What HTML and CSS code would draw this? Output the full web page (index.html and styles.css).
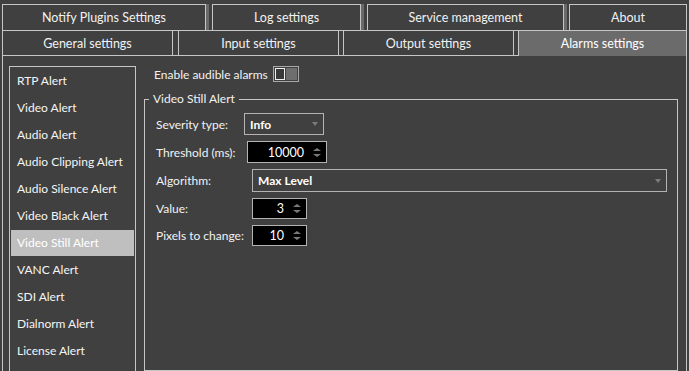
FILE: index.html
```html
<!DOCTYPE html>
<html>
<head>
<meta charset="utf-8">
<link rel="stylesheet" href="styles.css">
</head>
<body>
<div class="app">
  <div class="tabrow row1">
    <div class="tab t-notify">Notify Plugins Settings</div>
    <div class="tab t-log">Log settings</div>
    <div class="tab t-service">Service management</div>
    <div class="tab t-about">About</div>
  </div>
  <div class="tabrow row2">
    <div class="tab t-general">General settings</div>
    <div class="tab t-input">Input settings</div>
    <div class="tab t-output">Output settings</div>
    <div class="tab t-alarms active">Alarms settings</div>
  </div>
  <div class="pane">
    <ul class="alert-list">
      <li>RTP Alert</li>
      <li>Video Alert</li>
      <li>Audio Alert</li>
      <li>Audio Clipping Alert</li>
      <li>Audio Silence Alert</li>
      <li>Video Black Alert</li>
      <li class="selected">Video Still Alert</li>
      <li>VANC Alert</li>
      <li>SDI Alert</li>
      <li>Dialnorm Alert</li>
      <li>License Alert</li>
    </ul>
    <div class="content">
      <div class="enable-row">
        <span>Enable audible alarms</span>
        <span class="toggle"><span class="knob"></span><span class="track"></span></span>
      </div>
      <fieldset class="group">
        <legend>Video Still Alert</legend>
        <div class="form">
          <div class="form-row">
            <span class="label l-sev">Severity type:</span>
            <div class="combo combo-sev"><span>Info</span><span class="arrow"></span></div>
          </div>
          <div class="form-row">
            <span class="label l-thr">Threshold (ms):</span>
            <div class="spin spin-wide"><span>10000</span><span class="spin-arrows"><span class="up"></span><span class="down"></span></span></div>
          </div>
          <div class="form-row">
            <span class="label l-std">Algorithm:</span>
            <div class="combo combo-algo"><span>Max Level</span><span class="arrow"></span></div>
          </div>
          <div class="form-row">
            <span class="label l-std">Value:</span>
            <div class="spin spin-small"><span>3</span><span class="spin-arrows"><span class="up"></span><span class="down"></span></span></div>
          </div>
          <div class="form-row">
            <span class="label l-std">Pixels to change:</span>
            <div class="spin spin-small"><span>10</span><span class="spin-arrows"><span class="up"></span><span class="down"></span></span></div>
          </div>
        </div>
      </fieldset>
    </div>
  </div>
</div>
</body>
</html>
```
FILE: styles.css
```css
html, body {
  margin: 0;
  height: 371px;
  overflow: hidden;
  background: #404040;
}
body {
  font-family: Lato, "Open Sans", sans-serif;
  font-size: 12px;
  color: #f2f2f2;
}
.app {
  padding: 4px 2px 0 2px;
}
.tabrow {
  display: flex;
  box-sizing: border-box;
}
.row1 {
  height: 26px;
}
.tab {
  box-sizing: border-box;
  display: flex;
  align-items: center;
  justify-content: center;
  background: #404040;
  white-space: nowrap;
  font-size: 12.5px;
}
.row1 .tab {
  border: 1px solid #c6c6c6;
  border-bottom: none;
  height: 26px;
  padding-bottom: 1px;
}
.t-notify { width: 204px; margin-right: 6px; box-shadow: 3px 0 0 #6a6a6a; }
.t-log { width: 149px; margin-right: 6px; box-shadow: 3px 0 0 #6a6a6a; }
.t-service { width: 197px; margin-right: 5px; box-shadow: 3px 0 0 #6a6a6a; }
.t-about { flex: 1; }

.row2 {
  height: 26px;
  border-top: 1px solid #c6c6c6;
  border-bottom: 1px solid #c6c6c6;
}
.row2 .tab {
  height: 24px;
  border-left: 1px solid #c6c6c6;
  border-right: 1px solid #c6c6c6;
}
.t-general { width: 171px; margin-right: 5px; }
.t-input { width: 161px; margin-right: 4px; }
.t-output { width: 171px; margin-right: 4px; }
.t-alarms { flex: 1; }
.row2 .tab.active {
  background: #6b6b6b;
  height: 25px;
  margin-bottom: -1px;
  padding-bottom: 1px;
  color: #ffffff;
}

.pane {
  display: flex;
  box-sizing: border-box;
  height: 315px;
  overflow: hidden;
  border-left: 1px solid #c6c6c6;
  border-right: 1px solid #c6c6c6;
  padding: 10px 8px 0 6px;
}
.alert-list {
  list-style: none;
  margin: 0 8px 0 0;
  padding: 1px;
  width: 127px;
  box-sizing: border-box;
  height: 320px;
  flex: none;
  border: 1px solid #c6c6c6;
}
.alert-list li {
  height: 26px;
  line-height: 26px;
  margin-bottom: 1px;
  padding-left: 6px;
  color: #f5f5f5;
  white-space: nowrap;
}
.alert-list li.selected {
  background: #bfbfbf;
  color: #ffffff;
}

.content {
  flex: 1;
  display: flex;
  flex-direction: column;
  min-width: 0;
}
.enable-row {
  display: flex;
  align-items: center;
  height: 16px;
  padding-left: 10px;
  gap: 5px;
}
.toggle {
  box-sizing: border-box;
  width: 26px;
  height: 16px;
  border: 1px solid #a8a8a8;
  display: flex;
  align-items: center;
  padding: 1px;
  gap: 1px;
  flex: none;
}
.knob {
  box-sizing: border-box;
  width: 10px;
  height: 12px;
  border: 1px solid #f0f0f0;
  background: #3a3a3a;
}
.track {
  flex: 1;
  height: 12px;
  background: #6e6e6e;
}

.group {
  margin: 9px 0 0 0;
  padding: 0 10px 0 4px;
  border: 1px solid #c6c6c6;
  min-width: 0;
  height: 300px;
}
.group legend {
  padding: 0 4px;
  line-height: 16px;
  color: #f2f2f2;
}
.form {
  display: flex;
  flex-direction: column;
  gap: 6px;
  margin-top: 6px;
  padding-left: 7px;
}
.form-row {
  display: flex;
  align-items: center;
}
.label { flex: none; white-space: nowrap; }
.l-sev { width: 88px; }
.l-thr { width: 91px; }
.l-std { width: 96px; }

.combo {
  box-sizing: border-box;
  height: 22px;
  border: 1px solid #b3b3b3;
  background: #404040;
  display: flex;
  align-items: center;
  justify-content: space-between;
  padding: 0 5px 0 5px;
  font-weight: 700;
  color: #ffffff;
}
.combo-sev { width: 80px; }
.combo-algo { flex: 1; height: 23px; }
.arrow {
  width: 0;
  height: 0;
  border-left: 3.5px solid transparent;
  border-right: 3.5px solid transparent;
  border-top: 4px solid #7c7c7c;
}

.spin {
  box-sizing: border-box;
  background: #000000;
  border: 1px solid #b3b3b3;
  display: flex;
  align-items: center;
  justify-content: flex-end;
  padding-right: 5px;
  color: #ffffff;
  font-size: 12.5px;
}
.spin-wide { width: 80px; height: 22px; }
.spin-small { width: 55px; height: 21px; }
.spin-arrows {
  display: flex;
  flex-direction: column;
  gap: 3px;
  margin-left: 9px;
}
.spin-arrows .up {
  width: 0;
  height: 0;
  border-left: 4px solid transparent;
  border-right: 4px solid transparent;
  border-bottom: 3px solid #7a7a7a;
}
.spin-arrows .down {
  width: 0;
  height: 0;
  border-left: 4px solid transparent;
  border-right: 4px solid transparent;
  border-top: 3px solid #7a7a7a;
}
```
